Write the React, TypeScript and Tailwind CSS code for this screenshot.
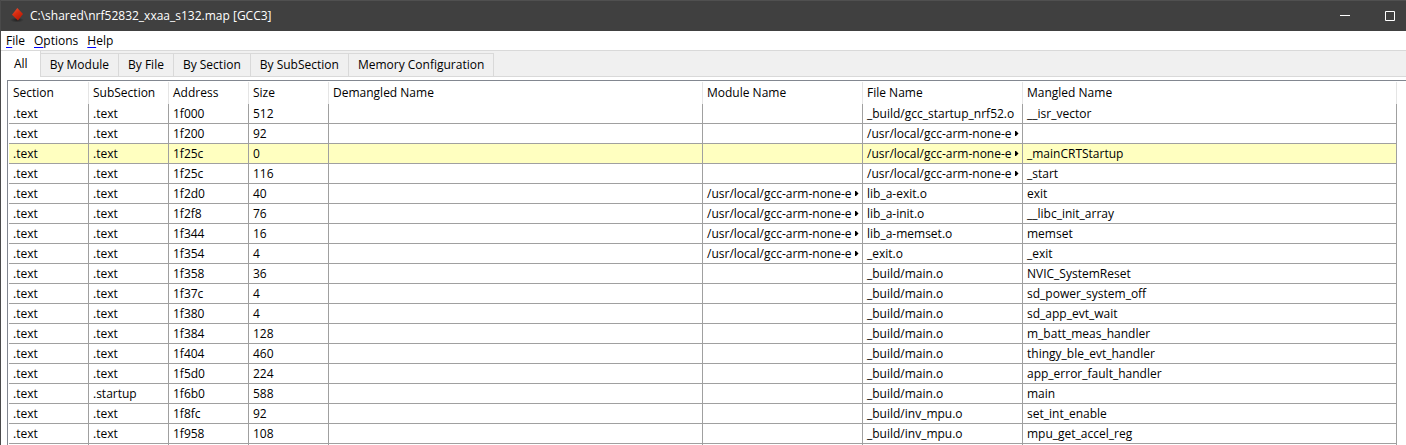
import { useState } from "react";

type Row = {
  section: string;
  sub: string;
  address: string;
  size: string;
  module?: string;
  file?: string;
  name?: string;
};

const GCC_PATH = "/usr/local/gcc-arm-none-e";

const rows: Row[] = [
  { section: ".text", sub: ".text", address: "1f000", size: "512", file: "_build/gcc_startup_nrf52.o", name: "__isr_vector" },
  { section: ".text", sub: ".text", address: "1f200", size: "92", file: GCC_PATH },
  { section: ".text", sub: ".text", address: "1f25c", size: "0", file: GCC_PATH, name: "_mainCRTStartup" },
  { section: ".text", sub: ".text", address: "1f25c", size: "116", file: GCC_PATH, name: "_start" },
  { section: ".text", sub: ".text", address: "1f2d0", size: "40", module: GCC_PATH, file: "lib_a-exit.o", name: "exit" },
  { section: ".text", sub: ".text", address: "1f2f8", size: "76", module: GCC_PATH, file: "lib_a-init.o", name: "__libc_init_array" },
  { section: ".text", sub: ".text", address: "1f344", size: "16", module: GCC_PATH, file: "lib_a-memset.o", name: "memset" },
  { section: ".text", sub: ".text", address: "1f354", size: "4", module: GCC_PATH, file: "_exit.o", name: "_exit" },
  { section: ".text", sub: ".text", address: "1f358", size: "36", file: "_build/main.o", name: "NVIC_SystemReset" },
  { section: ".text", sub: ".text", address: "1f37c", size: "4", file: "_build/main.o", name: "sd_power_system_off" },
  { section: ".text", sub: ".text", address: "1f380", size: "4", file: "_build/main.o", name: "sd_app_evt_wait" },
  { section: ".text", sub: ".text", address: "1f384", size: "128", file: "_build/main.o", name: "m_batt_meas_handler" },
  { section: ".text", sub: ".text", address: "1f404", size: "460", file: "_build/main.o", name: "thingy_ble_evt_handler" },
  { section: ".text", sub: ".text", address: "1f5d0", size: "224", file: "_build/main.o", name: "app_error_fault_handler" },
  { section: ".text", sub: ".startup", address: "1f6b0", size: "588", file: "_build/main.o", name: "main" },
  { section: ".text", sub: ".text", address: "1f8fc", size: "92", file: "_build/inv_mpu.o", name: "set_int_enable" },
  { section: ".text", sub: ".text", address: "1f958", size: "108", file: "_build/inv_mpu.o", name: "mpu_get_accel_reg" },
  { section: "", sub: "", address: "", size: "" },
];

const columns = [
  { label: "Section", width: "w-20" },
  { label: "SubSection", width: "w-20" },
  { label: "Address", width: "w-20" },
  { label: "Size", width: "w-20" },
  { label: "Demangled Name", width: "w-auto" },
  { label: "Module Name", width: "w-40" },
  { label: "File Name", width: "w-40" },
  { label: "Mangled Name", width: "w-auto" },
];

const tabs = ["All", "By Module", "By File", "By Section", "By SubSection", "Memory Configuration"];

function DiamondIcon() {
  return (
    <svg width="16" height="16" viewBox="0 0 16 16" aria-hidden="true">
      <defs>
        <linearGradient id="diamond" x1="0" y1="0" x2="0.6" y2="1">
          <stop offset="0" stopColor="#e8583c" />
          <stop offset="0.5" stopColor="#d82c10" />
          <stop offset="1" stopColor="#b81a06" />
        </linearGradient>
        <radialGradient id="shadow">
          <stop offset="0" stopColor="#202020" />
          <stop offset="1" stopColor="#404040" />
        </radialGradient>
      </defs>
      <ellipse cx="8" cy="12" rx="7" ry="2.5" fill="url(#shadow)" />
      <path d="M8.3 0 14 6 9 12.6 3 6.8Z" fill="url(#diamond)" />
    </svg>
  );
}

function Cell({ text = "" }: { text?: string }) {
  return (
    <td className="h-5 border-r border-b border-[#a0a0a0] px-1 py-0">
      <div className="flex items-center gap-[3px] whitespace-nowrap">
        {text}
        {text === GCC_PATH && (
          <svg width="4" height="5" viewBox="0 0 4 5" className="shrink-0" aria-hidden="true">
            <path d="M0 0H1L3.5 2.5 1 5H0Z" fill="#000" />
          </svg>
        )}
      </div>
    </td>
  );
}

export default function App() {
  const [active, setActive] = useState("All");
  const [selected, setSelected] = useState(2);

  return (
    <div className="flex h-screen flex-col overflow-hidden border-l border-[#4a4a4a] bg-white font-['Open_Sans','Noto_Sans',sans-serif] text-xs text-black">
      <header className="flex h-[31px] shrink-0 items-center border-t border-[#505050] bg-[#404040] pl-2 text-white">
        <DiamondIcon />
        <h1 className="ml-[5px] flex-1">C:\shared\nrf52832_xxaa_s132.map [GCC3]</h1>
        <button aria-label="Minimize" className="flex h-full w-[45px] items-center justify-center">
          <svg width="10" height="10" viewBox="0 0 10 10" aria-hidden="true">
            <path d="M0 4.5H10" stroke="#fff" />
          </svg>
        </button>
        <button aria-label="Maximize" className="flex h-full w-[39px] items-center justify-end pr-[11px]">
          <svg width="10" height="10" viewBox="0 0 10 10" aria-hidden="true">
            <path d="M.5 .5H9.5V9.5H.5Z" fill="none" stroke="#fff" />
          </svg>
        </button>
      </header>

      <nav aria-label="Menu" className="flex h-[19px] shrink-0 items-center gap-[9px] pt-px pl-[5px]">
        {["File", "Options", "Help"].map((item) => (
          <button key={item}>
            <span className="underline decoration-[#0000ff] underline-offset-2">{item[0]}</span>
            {item.slice(1)}
          </button>
        ))}
      </nav>

      <div role="tablist" className="flex h-[27px] shrink-0 items-stretch border-y border-[#d9d9d9] bg-[#f0f0f0]">
        {tabs.map((tab) => (
          <button
            key={tab}
            role="tab"
            aria-selected={tab === active}
            onClick={() => setActive(tab)}
            className={
              tab === active
                ? "-mb-px border-r border-[#d9d9d9] bg-white pr-3 pl-[13px]"
                : "mt-0.5 border-t border-r border-[#d9d9d9] px-[9px]"
            }
          >
            {tab}
          </button>
        ))}
      </div>

      <main className="mt-[3px] ml-1.5 min-h-0 flex-1 overflow-hidden border-t border-l border-[#828790] pt-px pr-[9px] pl-px">
        <table className="w-full table-fixed border-separate border-spacing-0">
          <thead>
            <tr>
              {columns.map((c) => (
                <th
                  key={c.label}
                  className={`h-[22px] border-r border-[#e5e5e5] px-1 py-0 text-left font-normal whitespace-nowrap ${c.width}`}
                >
                  {c.label}
                </th>
              ))}
            </tr>
          </thead>
          <tbody>
            {rows.map((r, i) => (
              <tr key={i} onClick={() => setSelected(i)} className={i === selected ? "bg-[#ffffc0]" : "bg-white"}>
                <Cell text={r.section} />
                <Cell text={r.sub} />
                <Cell text={r.address} />
                <Cell text={r.size} />
                <Cell />
                <Cell text={r.module} />
                <Cell text={r.file} />
                <Cell text={r.name} />
              </tr>
            ))}
          </tbody>
        </table>
      </main>
    </div>
  );
}
